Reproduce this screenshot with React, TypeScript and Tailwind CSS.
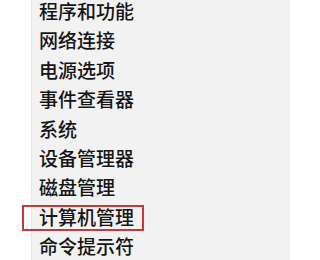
const ITEMS = [
  "程序和功能",
  "网络连接",
  "电源选项",
  "事件查看器",
  "系统",
  "设备管理器",
  "磁盘管理",
  "计算机管理",
  "命令提示符",
];

const HIGHLIGHT = "计算机管理";

export default function App() {
  return (
    <div className="flex h-[260px] w-[290px] overflow-hidden bg-white">
      <div className="w-[31px] shrink-0 bg-white" />
      <div className="flex-1 border-l border-[#e4e4e4] bg-[#f2f2f2]">
        <ul className="font-['Microsoft_YaHei','Noto_Sans_CJK_SC',sans-serif] text-[19px] font-medium text-[#151515]">
          {ITEMS.map((item) => (
            <li key={item} className="relative h-[29.4px] pl-[7px] leading-[21px]">
              {item}
              {item === HIGHLIGHT && (
                <span className="absolute left-[-10px] top-[-1px] h-[26px] w-[122px] border-2 border-[#c6383b]" />
              )}
            </li>
          ))}
        </ul>
      </div>
    </div>
  );
}
